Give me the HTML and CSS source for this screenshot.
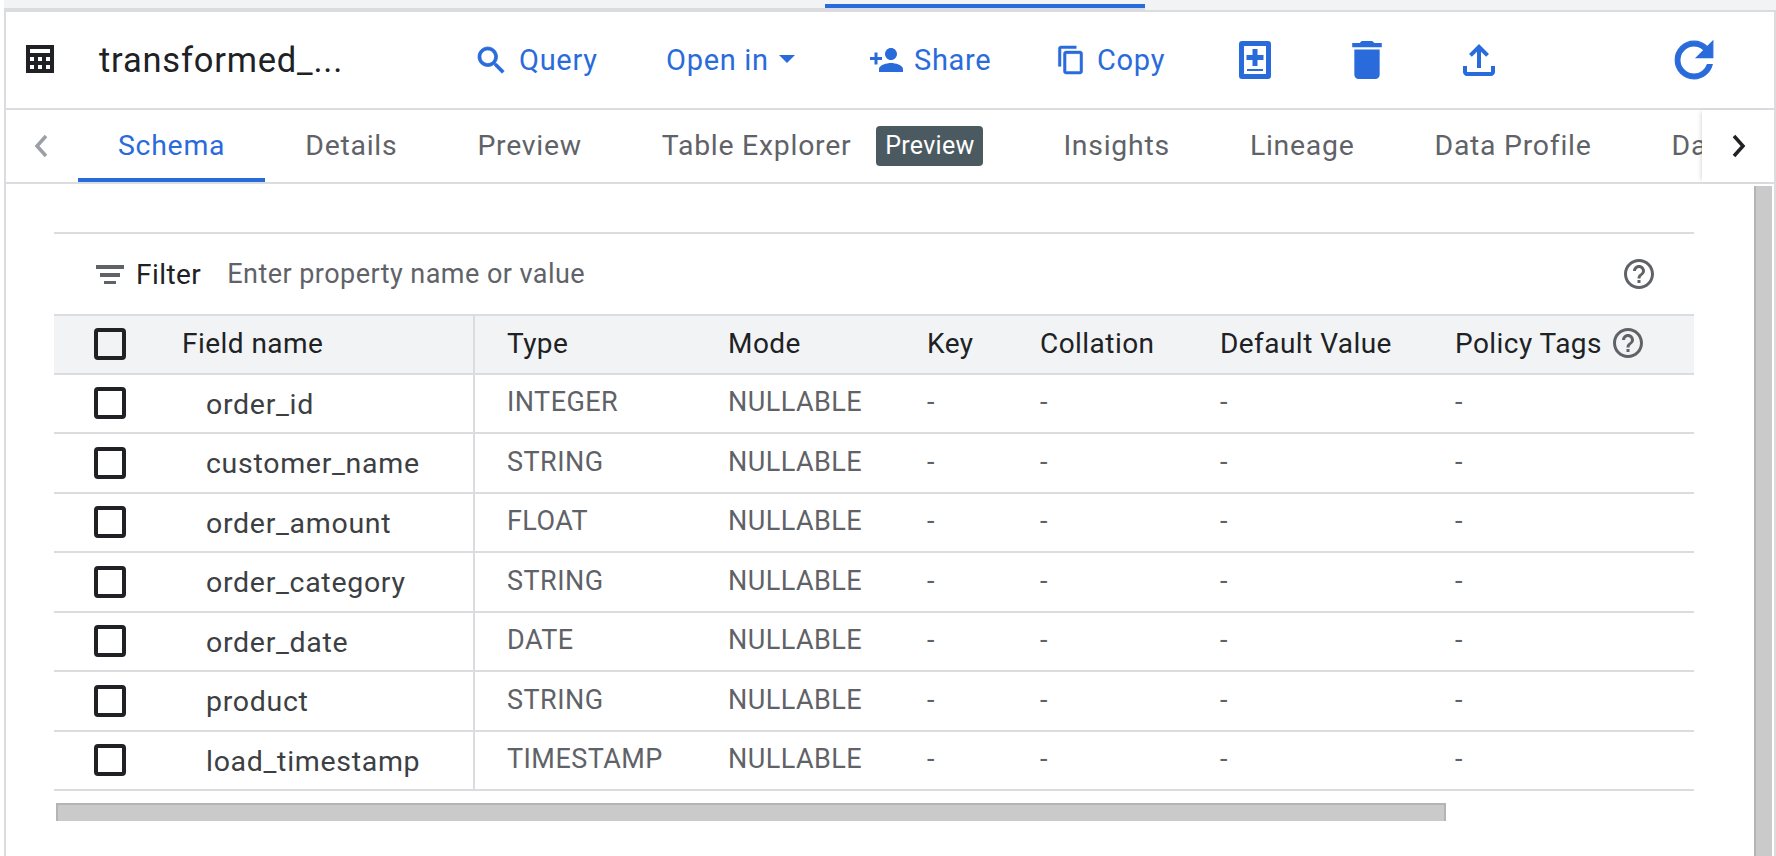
FILE: index.html
```html
<!doctype html>
<html>
  <head>
    <meta charset="utf-8" />
    <title>transformed_orders - Schema</title>
    <link rel="stylesheet" href="styles.css">
  </head>
  <body>
    <div class="topstrip">
      <div class="strip-left"></div>
      <div class="strip-tab"></div>
      <div class="strip-right"></div>
    </div>
    <div class="panel">
      <div class="toolbar">
        <svg class="table-icon" viewBox="0 0 28 28"><path fill="#202124" fill-rule="evenodd" d="M0 0h28v28H0zM4 4v4h20V4zM4 12v4h4v-4zM12 12v4h4v-4zM20 12v4h4v-4zM4 20v4h4v-4zM12 20v4h4v-4zM20 20v4h4v-4z"/></svg>
        <div class="title">transformed_...</div>
        <div class="action">
          <svg class="icon-query" viewBox="3 3 18 18"><path d="M15.5 14h-.79l-.28-.27C15.41 12.59 16 11.11 16 9.5 16 5.91 13.09 3 9.5 3S3 5.91 3 9.5 5.91 16 9.5 16c1.61 0 3.09-.59 4.23-1.57l.27.28v.79l5 4.99L20.49 19l-4.99-5zm-6 0C7.01 14 5 11.99 5 9.5S7.01 5 9.5 5 14 7.01 14 9.5 11.99 14 9.5 14z"/></svg>
          <span>Query</span>
        </div>
        <div class="action">
          <span>Open in</span>
          <svg class="icon-caret" viewBox="0 0 16 8"><path d="M0 0h16L8 8z"/></svg>
        </div>
        <div class="action">
          <svg class="icon-share" viewBox="1 4 22 16"><path d="M15 12c2.21 0 4-1.79 4-4s-1.79-4-4-4-4 1.79-4 4 1.79 4 4 4zm-9-2V7H4v3H1v2h3v3h2v-3h3v-2H6zm9 4c-2.67 0-8 1.34-8 4v2h16v-2c0-2.66-5.33-4-8-4z"/></svg>
          <span>Share</span>
        </div>
        <div class="action">
          <svg class="icon-copy" viewBox="2 1 19 22"><path d="M16 1H4c-1.1 0-2 .9-2 2v14h2V3h12V1zm3 4H8c-1.1 0-2 .9-2 2v14c0 1.1.9 2 2 2h11c1.1 0 2-.9 2-2V7c0-1.1-.9-2-2-2zm0 16H8V7h11v14z"/></svg>
          <span>Copy</span>
        </div>
        <svg class="icon-add" viewBox="0 0 32 38"><path fill-rule="evenodd" d="M3 0h26a3 3 0 0 1 3 3v32a3 3 0 0 1-3 3H3a3 3 0 0 1-3-3V3a3 3 0 0 1 3-3zM5 5v28h22V5zM13.500 8h5v6h6v5h-6v6h-5v-6h-6v-5h6zM8 28h16v2H8z"/></svg>
        <svg class="icon-trash" viewBox="5 3 14 18"><path d="M6 19c0 1.100.9 2 2 2h8c1.100 0 2-.9 2-2V7H6v12zM19 4h-3.500l-1-1h-5l-1 1H5v2h14V4z"/></svg>
        <svg class="icon-upload" viewBox="4 4 16 16"><path d="M18 15v3H6v-3H4v3c0 1.100.9 2 2 2h12c1.100 0 2-.9 2-2v-3h-2zM7 9l1.410 1.410L11 7.830V16h2V7.830l2.590 2.580L17 9l-5-5-5 5z"/></svg>
        <svg class="icon-refresh" viewBox="3.500 3.500 17 17"><path d="M17.650 6.350C16.200 4.900 14.210 4 12 4c-4.420 0-7.990 3.580-7.990 8s3.570 8 7.990 8c3.730 0 6.840-2.550 7.730-6h-2.080c-.82 2.330-3.040 4-5.650 4-3.310 0-6-2.690-6-6s2.690-6 6-6c1.660 0 3.140.69 4.220 1.780L13 11h7V4l-2.350 2.350z"/></svg>
      </div>

      <div class="tabbar">
        <div class="tab-prev">
          <svg viewBox="0 0 14 24"><path d="M12 2 3 12l9 10" /></svg>
        </div>
        <div class="tabs">
          <div class="tab active">Schema</div>
          <div class="tab">Details</div>
          <div class="tab">Preview</div>
          <div class="tab with-badge">Table Explorer</div>
          <div class="badge">Preview</div>
          <div class="tab">Insights</div>
          <div class="tab">Lineage</div>
          <div class="tab">Data Profile</div>
          <div class="tab">Da</div>
        </div>
        <div class="tab-next">
          <svg viewBox="0 0 14 24"><path d="M2 2l9 10-9 10" /></svg>
        </div>
      </div>

      <div class="content">
        <div class="main">
          <div class="schema">
            <div class="filter">
              <svg class="filter-icon" viewBox="0 0 28 19"><path d="M0 0h28v4H0zM4 8h20v4H4zM8 16h12v3H8z"/></svg>
              <span class="filter-label">Filter</span>
              <span class="filter-hint">Enter property name or value</span>
              <svg class="help filter-help" viewBox="2 2 20 20"><path d="M11 18h2v-2h-2v2zm1-16C6.480 2 2 6.480 2 12s4.480 10 10 10 10-4.480 10-10S17.520 2 12 2zm0 18c-4.410 0-8-3.590-8-8s3.590-8 8-8 8 3.590 8 8-3.590 8-8 8zm0-14c-2.210 0-4 1.790-4 4h2c0-1.100.9-2 2-2s2 .9 2 2c0 2-3 1.750-3 5h2c0-2.250 3-2.500 3-5 0-2.210-1.790-4-4-4z"/></svg>
            </div>

            <div class="row head">
              <div class="check-cell"><span class="checkbox"></span><span class="head-name">Field name</span></div>
              <div class="cell">Type</div>
              <div class="cell">Mode</div>
              <div class="cell">Key</div>
              <div class="cell">Collation</div>
              <div class="cell">Default Value</div>
              <div class="cell"><span>Policy Tags</span>
                <svg class="help head-help" viewBox="2 2 20 20"><path d="M11 18h2v-2h-2v2zm1-16C6.480 2 2 6.480 2 12s4.480 10 10 10 10-4.480 10-10S17.520 2 12 2zm0 18c-4.410 0-8-3.590-8-8s3.590-8 8-8 8 3.590 8 8-3.590 8-8 8zm0-14c-2.210 0-4 1.790-4 4h2c0-1.100.9-2 2-2s2 .9 2 2c0 2-3 1.750-3 5h2c0-2.250 3-2.500 3-5 0-2.210-1.790-4-4-4z"/></svg>
              </div>
            </div>

            <div class="row">
              <div class="check-cell"><span class="checkbox"></span><span class="name">order_id</span></div>
              <div class="cell">INTEGER</div><div class="cell">NULLABLE</div><div class="cell">-</div><div class="cell">-</div><div class="cell">-</div><div class="cell">-</div>
            </div>
            <div class="row">
              <div class="check-cell"><span class="checkbox"></span><span class="name">customer_name</span></div>
              <div class="cell">STRING</div><div class="cell">NULLABLE</div><div class="cell">-</div><div class="cell">-</div><div class="cell">-</div><div class="cell">-</div>
            </div>
            <div class="row">
              <div class="check-cell"><span class="checkbox"></span><span class="name">order_amount</span></div>
              <div class="cell">FLOAT</div><div class="cell">NULLABLE</div><div class="cell">-</div><div class="cell">-</div><div class="cell">-</div><div class="cell">-</div>
            </div>
            <div class="row">
              <div class="check-cell"><span class="checkbox"></span><span class="name">order_category</span></div>
              <div class="cell">STRING</div><div class="cell">NULLABLE</div><div class="cell">-</div><div class="cell">-</div><div class="cell">-</div><div class="cell">-</div>
            </div>
            <div class="row">
              <div class="check-cell"><span class="checkbox"></span><span class="name">order_date</span></div>
              <div class="cell">DATE</div><div class="cell">NULLABLE</div><div class="cell">-</div><div class="cell">-</div><div class="cell">-</div><div class="cell">-</div>
            </div>
            <div class="row">
              <div class="check-cell"><span class="checkbox"></span><span class="name">product</span></div>
              <div class="cell">STRING</div><div class="cell">NULLABLE</div><div class="cell">-</div><div class="cell">-</div><div class="cell">-</div><div class="cell">-</div>
            </div>
            <div class="row">
              <div class="check-cell"><span class="checkbox"></span><span class="name">load_timestamp</span></div>
              <div class="cell">TIMESTAMP</div><div class="cell">NULLABLE</div><div class="cell">-</div><div class="cell">-</div><div class="cell">-</div><div class="cell">-</div>
            </div>
          </div>
          <div class="hscroll"></div>
        </div>
        <div class="vscroll"></div>
      </div>
    </div>
  </body>
</html>
```

FILE: styles.css
```css
html, body {
  margin: 0;
  height: 856px;
  overflow: hidden;
  background: #fff;
  font-family: Roboto, sans-serif;
  color: #202124;
}

.topstrip {
  display: flex;
  height: 12px;
  margin-left: 4px;
}

.strip-left, .strip-right, .strip-tab {
  box-sizing: border-box;
  background: #f1f3f4;
}

.strip-left {
  width: 821px;
  border-bottom: 4px solid #dadce0;
}

.strip-tab {
  width: 320px;
  background: linear-gradient(#f1f3f4 4px, #2a6bdb 4px, #2a6bdb 8px, #dadce0 8px);
}

.strip-right {
  flex: 1;
  border-bottom: 2px solid #dadce0;
}

.panel {
  margin-left: 4px;
  height: 844px;
  border-left: 2px solid #dadce0;
  border-right: 2px solid #dadce0;
  display: flex;
  flex-direction: column;
}

.toolbar {
  box-sizing: border-box;
  flex: none;
  height: 98px;
  border-bottom: 2px solid #dadce0;
  display: grid;
  grid-template-columns: 73px 379px 188px 204px 188px 181px 111px 113px 211px auto;
  justify-content: start;
  align-items: center;
  padding-left: 20px;
}

.table-icon {
  width: 28px;
  height: 28px;
  margin-top: -2px;
}

.title {
  font-size: 34.5px;
  letter-spacing: 0.8px;
  color: #202124;
}

.action {
  display: flex;
  align-items: center;
  font-size: 29px;
  letter-spacing: 0.7px;
  color: #2a6bdb;
}

.toolbar svg {
  fill: #2a6bdb;
  display: block;
}

.toolbar .table-icon {
  fill: #202124;
}

.icon-query { width: 27px; height: 27px; margin-right: 14px; stroke: #2a6bdb; stroke-width: 0.5; overflow: visible; }
.icon-caret { width: 16px; height: 8px; margin-left: 10px; margin-top: -2px; }
.icon-share { width: 33px; height: 24px; margin-right: 11px; }
.icon-copy { width: 25px; height: 28px; margin-right: 14px; stroke: #2a6bdb; stroke-width: 0.4; overflow: visible; }
.icon-add { width: 32px; height: 38px; }
.icon-trash { width: 34px; height: 38px; }
.icon-upload { width: 32px; height: 32px; }
.icon-refresh { width: 40px; height: 40px; stroke: #2a6bdb; stroke-width: 0.5; }

.tabbar {
  box-sizing: border-box;
  flex: none;
  height: 74px;
  border-bottom: 2px solid #dadce0;
  display: flex;
}

.tab-prev {
  flex: none;
  width: 72px;
  display: flex;
  align-items: center;
  padding-left: 28px;
  box-sizing: border-box;
}

.tab-prev svg, .tab-next svg {
  width: 14px;
  height: 24px;
  fill: none;
  stroke-width: 3.5;
}

.tab-prev svg { stroke: #9aa0a6; }
.tab-next svg { stroke: #202124; }

.tabs {
  flex: 1;
  min-width: 0;
  display: flex;
  overflow: hidden;
}

.tab {
  flex: none;
  box-sizing: border-box;
  padding: 0 40px;
  font-size: 28.4px;
  letter-spacing: 0.75px;
  line-height: 72px;
  color: #5f6368;
}

.tab:last-child {
  padding-right: 0;
}

.tab.active {
  color: #2a6bdb;
  border-bottom: 4px solid #2a6bdb;
  height: 72px;
}

.tab.with-badge {
  padding-right: 25px;
}

.badge {
  flex: none;
  align-self: flex-start;
  margin: 16px 40px 0 0;
  width: 107px;
  height: 40px;
  line-height: 40px;
  text-align: center;
  border-radius: 4px;
  background: #4a5a60;
  color: #fff;
  font-size: 25px;
  letter-spacing: 0.3px;
}

.tab-next {
  flex: none;
  width: 72px;
  box-shadow: -3px 0 4px -2px rgba(60, 64, 67, 0.2);
  display: flex;
  align-items: center;
  padding-left: 30px;
  box-sizing: border-box;
}

.content {
  flex: 1;
  display: flex;
  min-height: 0;
}

.main {
  flex: 1;
  padding: 48px 0 0 48px;
  min-width: 0;
}

.vscroll {
  flex: none;
  width: 18px;
  margin: 2px 2px 0 0;
  box-sizing: border-box;
  background: #cacaca;
  border-left: 2px solid #b4b4b4;
}

.schema {
  width: 1640px;
  border-top: 2px solid #dadce0;
}

.filter {
  height: 80px;
  display: flex;
  align-items: center;
  padding-left: 42px;
  font-size: 27px;
  letter-spacing: 0.45px;
}

.filter-icon {
  width: 28px;
  height: 19px;
  fill: #5f6368;
  margin-right: 12px;
}

.filter-label {
  color: #202124;
  font-size: 28px;
  margin-right: 26px;
}

.filter-hint {
  color: #5f6368;
}

.help {
  fill: #5f6368;
  display: block;
}

.filter-help {
  width: 30px;
  height: 30px;
  margin-left: auto;
  margin-right: 40px;
}

.head-help {
  width: 30px;
  height: 30px;
  margin-left: 11px;
}

.row {
  box-sizing: border-box;
  height: 59.5px;
  display: grid;
  grid-template-columns: 421px 221px 199px 113px 180px 235px 1fr;
  align-items: center;
  border-bottom: 2px solid #dadce0;
  font-size: 27px;
  letter-spacing: 0.45px;
  color: #5f6368;
}

.row.head {
  height: 60.5px;
  border-top: 2px solid #dadce0;
  background: #f1f3f4;
  color: #202124;
  font-size: 28px;
}

.check-cell {
  height: 100%;
  display: flex;
  align-items: center;
  padding-left: 40px;
  border-right: 2px solid #dadce0;
  box-sizing: border-box;
}

.checkbox {
  flex: none;
  box-sizing: border-box;
  width: 32px;
  height: 32px;
  border: 4px solid #202124;
  border-radius: 4px;
}

.head-name {
  margin-left: 56px;
  margin-bottom: 2px;
}

.name {
  margin-left: 80px;
  margin-top: 2px;
  font-size: 28.5px;
  letter-spacing: 0.7px;
  color: #3c4043;
}

.cell {
  padding-left: 32px;
  display: flex;
  align-items: center;
  margin-bottom: 2px;
}

.hscroll {
  box-sizing: border-box;
  margin: 12px 0 0 2px;
  width: 1390px;
  height: 18px;
  background: #cacaca;
  border-top: 2px solid #b4b4b4;
  border-left: 2px solid #b4b4b4;
  border-right: 2px solid #b4b4b4;
}
```
